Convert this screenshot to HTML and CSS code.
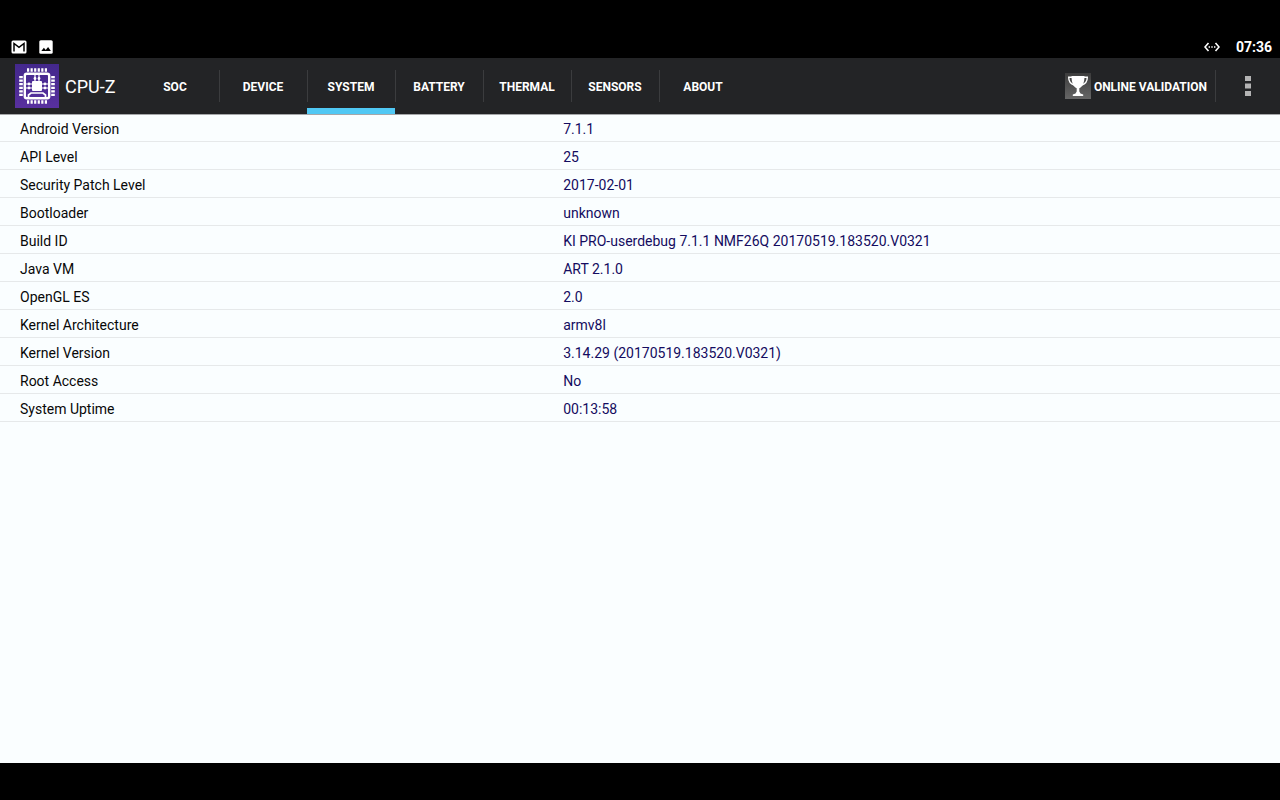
FILE: index.html
```html
<!DOCTYPE html>
<html lang="en">
<head>
<meta charset="utf-8">
<meta name="viewport" content="width=device-width, initial-scale=1">
<title>CPU-Z</title>
<link rel="stylesheet" href="styles.css">
</head>
<body>
<div class="status-bar">
  <div class="notifications">
    <svg width="16" height="14" viewBox="0 0 16 14" aria-hidden="true"><rect x="0.5" y="0.5" width="15" height="13" rx="1.5" fill="#fff"/><path d="M3 11.500V3.500L8 7.400l5-3.900v8" fill="none" stroke="#000" stroke-width="1.500"/></svg>
    <svg width="14" height="14" viewBox="0 0 14 14" aria-hidden="true"><rect x="0.3" y="0.3" width="13.4" height="13.4" rx="1.5" fill="#fff"/><path d="M2.3 11l2.6-3.2 1.8 2.1L9.1 7l2.8 4z" fill="#000"/></svg>
  </div>
  <div class="system-info">
    <svg width="16" height="10" viewBox="0 0 16 10" aria-hidden="true"><path d="M4.500 1L1 5l3.500 4M11.500 1L15 5l-3.500 4" fill="none" stroke="#fff" stroke-width="1.600"/><path d="M4.600 5h1.400M7.300 5h1.400M10 5h1.400" stroke="#fff" stroke-width="1.300"/></svg>
    <time class="clock">07:36</time>
  </div>
</div>
<header class="action-bar">
  <svg class="logo" width="44" height="44" viewBox="0 0 44 44" aria-hidden="true">
    <defs><linearGradient id="purple" x1="0" y1="0" x2="0" y2="1"><stop offset="0" stop-color="#43288c"/><stop offset="1" stop-color="#58309f"/></linearGradient></defs>
    <rect width="44" height="44" fill="url(#purple)"/>
    <g fill="none" stroke="#fff">
      <path d="M12 6h20M12 38h20" stroke-width="3.600" stroke-dasharray="2.200 1.360"/>
      <path d="M6 12v20M38 12v20" stroke-width="3.600" stroke-dasharray="2.200 1.360"/>
      <rect x="9.800" y="9.800" width="24.400" height="24.400" rx="2" stroke-width="2.400"/>
      <path d="M20 10v7M24 10v7M10 20h8M10 24h8M26 20h8M26 24h8" stroke-width="1.200"/>
      <path d="M13.500 34v-3l2.500-2h12l2.500 2v3" stroke-width="1.700"/>
    </g>
    <g fill="#fff"><rect x="17" y="17" width="10" height="10" rx="1"/><circle cx="20" cy="14.500" r="1.400"/><circle cx="24" cy="14.500" r="1.400"/><circle cx="14" cy="20" r="1.400"/><circle cx="14" cy="24" r="1.400"/><circle cx="30" cy="20" r="1.400"/><circle cx="30" cy="24" r="1.400"/></g>
  </svg>
  <h1 class="title">CPU-Z</h1>
  <nav class="tabs">
    <a class="tab" href="#soc">SOC</a>
    <a class="tab" href="#device">DEVICE</a>
    <a class="tab active" href="#system" aria-current="page">SYSTEM</a>
    <a class="tab" href="#battery">BATTERY</a>
    <a class="tab" href="#thermal">THERMAL</a>
    <a class="tab" href="#sensors">SENSORS</a>
    <a class="tab" href="#about">ABOUT</a>
  </nav>
  <button class="validate" type="button">
    <svg width="26" height="26" viewBox="0 0 26 26" aria-hidden="true">
      <defs><linearGradient id="gray" x1="0" y1="0" x2="0" y2="1"><stop offset="0" stop-color="#3c3c3c"/><stop offset="1" stop-color="#666"/></linearGradient></defs>
      <rect width="26" height="26" fill="url(#gray)"/>
      <path d="M6.500 3h13c0 6-1.500 10.500-5.200 12.300v3.200l1.200 2 2.700 1V23H7.800v-1.500l2.700-1 1.200-2v-3.200C8 13.500 6.500 9 6.500 3z" fill="#fff"/>
      <path d="M7.200 4.300H3.700c0 4 2 6.700 5.500 7.700M18.800 4.300h3.500c0 4-2 6.700-5.500 7.700" fill="none" stroke="#fff" stroke-width="1.400"/>
    </svg>
    <span>ONLINE VALIDATION</span>
  </button>
  <button class="overflow" type="button" aria-label="More options">
    <svg width="6" height="20" viewBox="0 0 6 20" fill="#b4b4b4" aria-hidden="true"><rect width="6" height="5"/><rect y="7.500" width="6" height="5"/><rect y="15" width="6" height="5"/></svg>
  </button>
</header>
<main class="content" id="system">
  <table class="info">
    <tbody>
      <tr><th scope="row">Android Version</th><td>7.1.1</td></tr>
      <tr><th scope="row">API Level</th><td>25</td></tr>
      <tr><th scope="row">Security Patch Level</th><td>2017-02-01</td></tr>
      <tr><th scope="row">Bootloader</th><td>unknown</td></tr>
      <tr><th scope="row">Build ID</th><td>KI PRO-userdebug 7.1.1 NMF26Q 20170519.183520.V0321</td></tr>
      <tr><th scope="row">Java VM</th><td>ART 2.1.0</td></tr>
      <tr><th scope="row">OpenGL ES</th><td>2.0</td></tr>
      <tr><th scope="row">Kernel Architecture</th><td>armv8l</td></tr>
      <tr><th scope="row">Kernel Version</th><td>3.14.29 (20170519.183520.V0321)</td></tr>
      <tr><th scope="row">Root Access</th><td>No</td></tr>
      <tr><th scope="row">System Uptime</th><td>00:13:58</td></tr>
    </tbody>
  </table>
</main>
</body>
</html>
```
FILE: styles.css
```css
* {
  box-sizing: border-box;
}

body {
  margin: 0;
  min-height: 100vh;
  display: flex;
  flex-direction: column;
  padding: 35px 0 37px;
  background: #000;
  font-family: Roboto, "Liberation Sans", sans-serif;
  font-size: 14px;
}

.status-bar {
  display: flex;
  align-items: center;
  justify-content: space-between;
  height: 23px;
  padding: 0 8px 0 11px;
  color: #fff;
}

.notifications,
.system-info {
  display: flex;
  align-items: center;
  gap: 12px;
}

.system-info {
  gap: 16px;
}

.clock {
  font-size: 14px;
  font-weight: 700;
}

.action-bar {
  display: flex;
  align-items: center;
  height: 56px;
  padding-left: 15px;
  background: #232426;
  color: #fff;
}

.logo {
  flex: none;
}

.title {
  width: 72px;
  margin: 0;
  padding-left: 6px;
  font-size: 18px;
  font-weight: 400;
  white-space: nowrap;
}

.tabs {
  display: flex;
  align-self: stretch;
  align-items: stretch;
}

.tab {
  display: flex;
  align-items: center;
  justify-content: center;
  width: 88px;
  padding-top: 2px;
  color: #fff;
  font-size: 12px;
  font-weight: 700;
  text-decoration: none;
  background: linear-gradient(#3b3c3e, #3b3c3e) left center / 1px 32px no-repeat;
}

.tab:first-child {
  background: none;
}

.tab.active {
  box-shadow: inset 0 -6px #50c8f4;
}

.validate,
.overflow {
  display: flex;
  align-items: center;
  height: 32px;
  padding: 0;
  border: 0;
  background: none;
  color: #fff;
  font: inherit;
}

.validate {
  gap: 3px;
  margin-left: auto;
  padding-right: 8px;
  border-right: 1px solid #3b3c3e;
  font-size: 12px;
  font-weight: 700;
  white-space: nowrap;
}

.validate span {
  padding-top: 2px;
}

.overflow {
  justify-content: center;
  width: 64px;
}

.content {
  flex: 1;
  background: #fafeff;
  box-shadow: inset 0 1px #a5a7a9;
}

.info {
  width: 100%;
  border-collapse: separate;
  border-spacing: 0;
  table-layout: fixed;
}

.info th,
.info td {
  height: 28px;
  padding: 2px 0 0;
  border-bottom: 1px solid #e6e9ea;
  line-height: 16px;
  text-align: left;
  color: #140c60;
  font-weight: 400;
}

.info th {
  width: 44%;
  padding-left: 20px;
  color: #080808;
}
```
